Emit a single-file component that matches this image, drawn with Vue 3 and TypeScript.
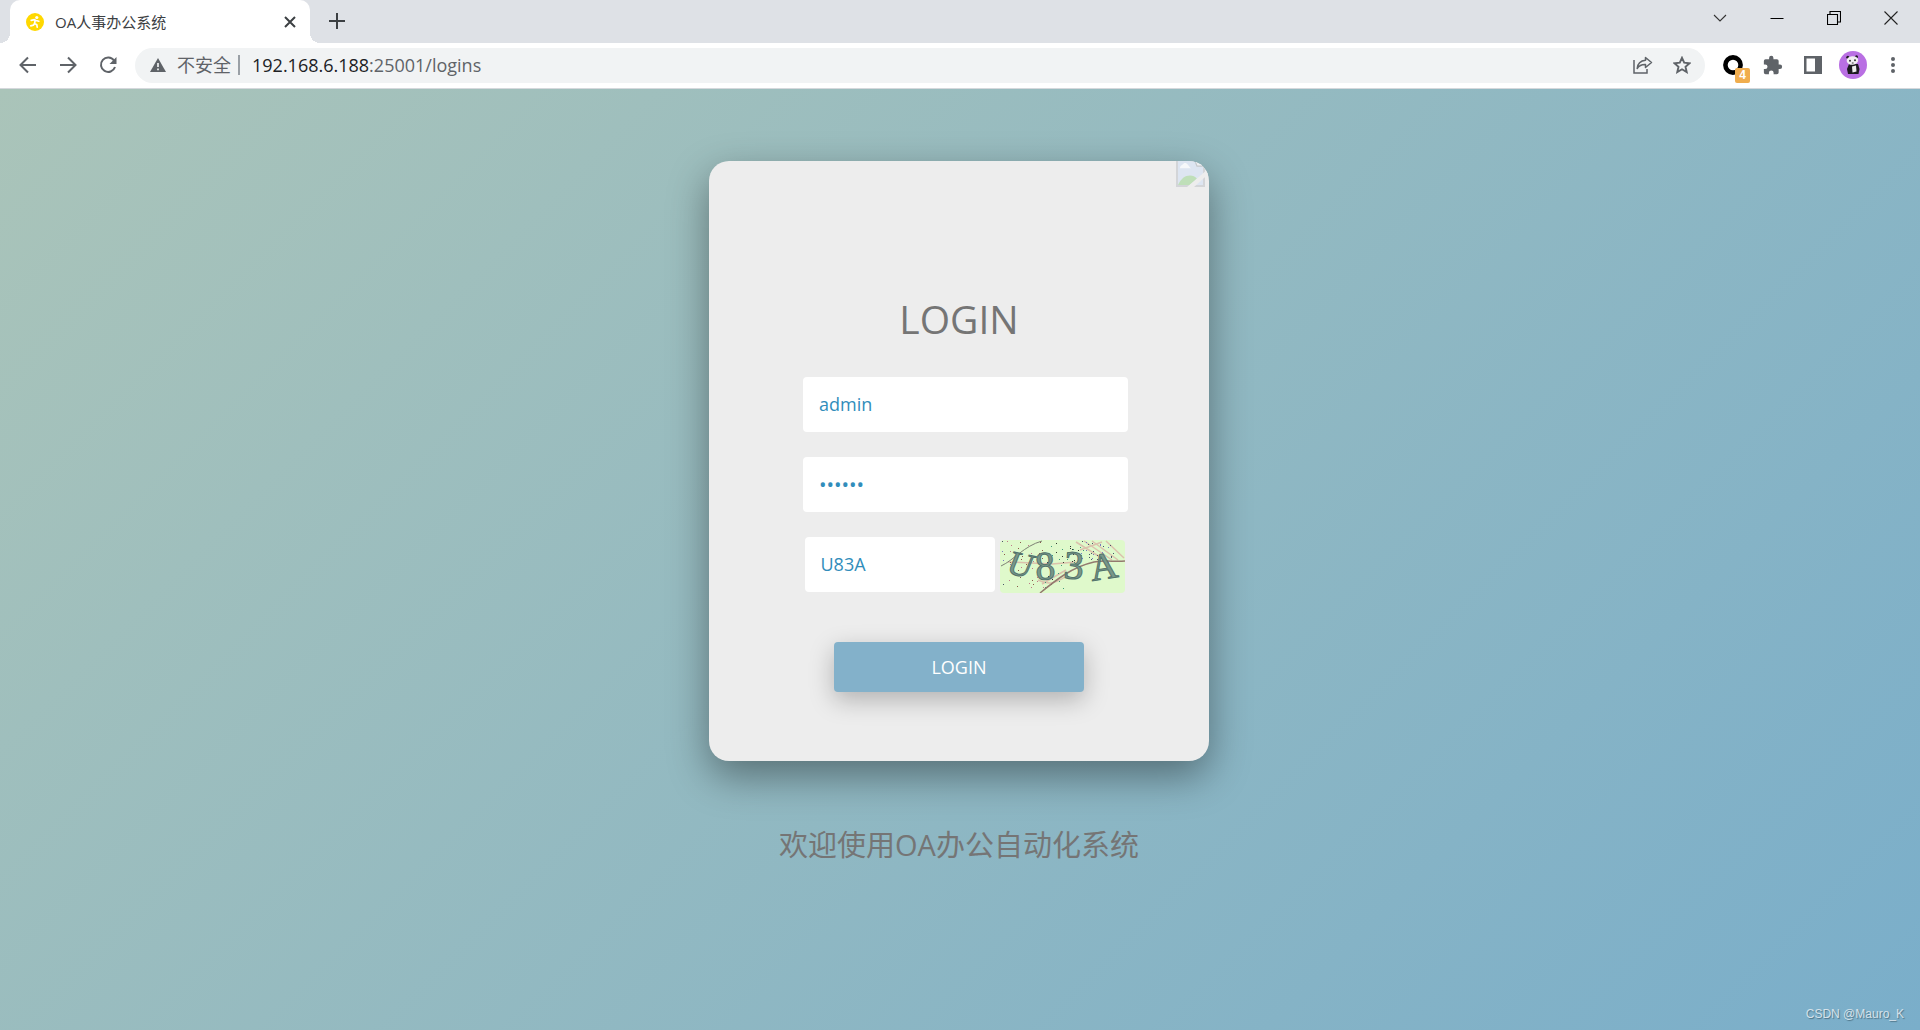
<script setup lang="ts">
import { ref } from 'vue'

const user = ref('admin')
const password = ref('123456')
const code = ref('U83A')

interface Speck {
  x: number
  y: number
  color: string
}

const colors = ['#4a5568', '#8a5a4a', '#3f9a78', '#7a7ac0', '#c07a8a', '#333a33']
const specks: Speck[] = Array.from({ length: 110 }, (_, i) => {
  const x = (i * 37 + ((i * i) % 11)) % 112
  const limit = x < 62 ? 48 : 22
  return { x: x + 2, y: ((i * 23 + ((i * i) % 7)) % limit) + 1, color: colors[i % colors.length] }
})
</script>

<template>
  <div class="browser">
    <header class="tabs">
      <div class="tab">
        <svg class="favicon" viewBox="0 0 18 18" aria-hidden="true">
          <circle cx="9" cy="9" r="9" fill="#ffd800" />
          <circle cx="10.8" cy="4.5" r="1.6" fill="#fff" />
          <path d="M5.2 7.4l3.2-.7 1.6.8 2.8.7M9.2 7.2l-.6 3.2 2.2 1.3.4 2.4M8.6 10.4l-1.3 1.8-2.5.6" fill="none" stroke="#fff" stroke-width="1.7" stroke-linecap="round" stroke-linejoin="round" />
        </svg>
        <span class="tab-title">OA人事办公系统</span>
        <button class="icon-btn tab-close" aria-label="关闭标签页">
          <svg width="12" height="12" viewBox="0 0 12 12"><path d="M1 1l10 10M11 1L1 11" stroke="#3c4043" stroke-width="2" /></svg>
        </button>
      </div>
      <button class="icon-btn new-tab" aria-label="新标签页">
        <svg width="16" height="16" viewBox="0 0 16 16"><path d="M8 0v16M0 8h16" stroke="#3c4043" stroke-width="2" /></svg>
      </button>
      <div class="window-controls">
        <button class="icon-btn" aria-label="搜索标签页">
          <svg width="14" height="14" viewBox="0 0 14 14"><path d="M1 4l6 6 6-6" fill="none" stroke="#333" stroke-width="1.1" /></svg>
        </button>
        <button class="icon-btn" aria-label="最小化">
          <svg width="14" height="14" viewBox="0 0 14 14"><path d="M.5 7.5h13" stroke="#000" /></svg>
        </button>
        <button class="icon-btn" aria-label="还原">
          <svg width="14" height="14" viewBox="0 0 14 14"><path d="M.5 3.5h10v10h-10zM3 3.500v-3h10.500v10.500h-3" fill="none" stroke="#000" stroke-width="1.1" /></svg>
        </button>
        <button class="icon-btn" aria-label="关闭">
          <svg width="14" height="14" viewBox="0 0 14 14"><path d="M.5 .5l13 13M13.5 .5l-13 13" stroke="#222" stroke-width="1.1" /></svg>
        </button>
      </div>
    </header>

    <nav class="toolbar">
      <button class="icon-btn nav-btn" aria-label="后退">
        <svg width="18" height="18" viewBox="0 0 18 18"><path d="M17 9H2M9 1.500L1.500 9 9 16.500" fill="none" stroke="#5f6368" stroke-width="2" /></svg>
      </button>
      <button class="icon-btn nav-btn" aria-label="前进">
        <svg width="18" height="18" viewBox="0 0 18 18"><path d="M1 9h15M9 1.500L16.500 9 9 16.500" fill="none" stroke="#5f6368" stroke-width="2" /></svg>
      </button>
      <button class="icon-btn nav-btn" aria-label="重新加载">
        <svg width="18" height="18" viewBox="0 0 18 18"><path d="M15 4.500A7.200 7.200 0 1 0 16 11" fill="none" stroke="#5f6368" stroke-width="2" /><path d="M17.500 1v7h-7z" fill="#5f6368" /></svg>
      </button>
      <div class="address">
        <svg width="16" height="14" viewBox="0 0 16 14" aria-hidden="true"><path d="M8 0l8 14H0z" fill="#5f6368" /><path d="M8 5v4M8 10.500v1.700" stroke="#f1f3f4" stroke-width="1.7" /></svg>
        <span class="insecure">不安全</span>
        <span class="divider"></span>
        <span class="url"><b>192.168.6.188</b>:25001/logins</span>
        <button class="icon-btn share" aria-label="分享">
          <svg width="20" height="18" viewBox="0 0 20 18"><path d="M1 4v13h13v-4" fill="none" stroke="#5f6368" stroke-width="1.5" /><path d="M12.500 1.500l6 5-6 5V8.600C8.500 8.400 6 9.800 4.200 12.500 4.600 8 7.500 4.800 12.500 4.300z" fill="none" stroke="#5f6368" stroke-width="1.5" stroke-linejoin="round" /></svg>
        </button>
        <button class="icon-btn" aria-label="收藏">
          <svg width="18" height="18" viewBox="0 0 18 18"><path d="M9 1.800l2.200 4.900 5.300.5-4 3.600 1.200 5.300L9 13.300l-4.700 2.800 1.200-5.300-4-3.600 5.300-.5z" fill="none" stroke="#5f6368" stroke-width="1.9" /></svg>
        </button>
      </div>
      <div class="extensions">
        <button class="icon-btn ext" aria-label="扩展">
          <svg width="20" height="20" viewBox="0 0 20 20"><circle cx="10" cy="10" r="7.6" fill="none" stroke="#000" stroke-width="4.6" /></svg>
          <span class="badge">4</span>
        </button>
        <button class="icon-btn" aria-label="扩展程序">
          <svg width="20" height="20" viewBox="1 0 23 23"><path fill="#5f6368" d="M20.500 11H19V7a2 2 0 0 0-2-2h-4V3.500a2.500 2.500 0 0 0-5 0V5H4a2 2 0 0 0-2 2v3.800h1.500a2.700 2.700 0 0 1 0 5.400H2V20a2 2 0 0 0 2 2h3.800v-1.500a2.700 2.700 0 0 1 5.400 0V22H17a2 2 0 0 0 2-2v-4h1.500a2.500 2.500 0 0 0 0-5z" /></svg>
        </button>
        <button class="icon-btn" aria-label="侧边栏">
          <svg width="18" height="18" viewBox="0 0 18 18"><path fill="#5f6368" fill-rule="evenodd" d="M0 0h18v18H0zM2.500 2.500v13h8.500v-13z" /></svg>
        </button>
        <button class="icon-btn" aria-label="用户">
          <svg width="28" height="28" viewBox="0 0 28 28">
            <circle cx="14" cy="14" r="14" fill="#b96fe3" />
            <path d="M10 13h9l1.500 5-1 5H9l-1-5z" fill="#1d1a20" />
            <path d="M13 15.500l4-1 .5 6-4 1z" fill="#eee" />
            <circle cx="8.800" cy="6.300" r="1.500" fill="#1d1a20" /><circle cx="17.500" cy="5.700" r="1.500" fill="#1d1a20" />
            <ellipse cx="13.400" cy="9.500" rx="5.800" ry="4.300" fill="#f1eef2" transform="rotate(-6 13 9)" />
            <circle cx="11" cy="9.800" r="1" fill="#333" /><circle cx="16" cy="9.300" r="1" fill="#333" />
            <path d="M12.800 12h1.800" stroke="#333" />
          </svg>
        </button>
        <button class="icon-btn" aria-label="菜单">
          <svg width="18" height="18" viewBox="0 0 18 18"><g fill="#5f6368"><circle cx="9" cy="3" r="2" /><circle cx="9" cy="9" r="2" /><circle cx="9" cy="15" r="2" /></g></svg>
        </button>
      </div>
    </nav>

    <main class="page">
      <form class="card" @submit.prevent>
        <svg class="broken" width="33" height="26" viewBox="0 0 33 25" preserveAspectRatio="none" aria-hidden="true">
          <path d="M0 0h29v25H0z" fill="#d3d5d8" />
          <path d="M2 0h25v23H2z" fill="#dde5f1" />
          <path d="M4 7c0-3 3-3 4-5 3-1 4 2 7 5z" fill="#f6f8fa" />
          <path d="M2 23c3-6 7-9 12-9 3 0 5 1 7 3l-7 6z" fill="#bfdfb9" />
          <path d="M11 25L33 7v5L18 25z" fill="#ededed" />
          <path d="M19 0l2 5h8l-7-5z" fill="#eef0f2" stroke="#c4c7ca" stroke-width="1.2" />
        </svg>
        <h1>LOGIN</h1>
        <input v-model="user" class="field" type="text" aria-label="用户名" />
        <input v-model="password" class="field password" type="password" aria-label="密码" />
        <div class="captcha-row">
          <input v-model="code" class="field code" type="text" aria-label="验证码" />
          <svg class="captcha" width="125" height="53" viewBox="0 0 125 53" role="img" aria-label="验证码图片">
            <rect width="125" height="53" fill="#dff9cb" />
            <g fill="none" stroke="#d9b3a4" stroke-width="1.5" opacity=".8">
              <path d="M8 22l44 2 24-2M38 40c12 6 20 2 30-5M76 2l32 20M84 1l28 19M92 1l26 19M106 1l18 17M42 44l24-14M80 10l22-8" />
            </g>
            <rect v-for="(s, i) in specks" :key="i" :x="s.x" :y="s.y" width="1" height="1" :fill="s.color" />
            <g fill="none" stroke="#7d8174">
              <path d="M1 26C14 20 24 6 42 1" />
              <path d="M40 53C56 40 72 27 94 22c12-2 20 0 31-1" stroke="#93796e" stroke-width="1.5" />
            </g>
            <g class="glyphs">
              <text class="slanted" x="6" y="33" transform="rotate(12 6 33)">U</text>
              <text x="36" y="40" transform="rotate(-4 36 40)">8</text>
              <text x="63" y="38" transform="rotate(4 63 38)">3</text>
              <text class="narrow" x="92" y="41" transform="rotate(-9 92 41)">A</text>
            </g>
          </svg>
        </div>
        <button class="submit" type="submit">LOGIN</button>
      </form>
      <p class="welcome">欢迎使用OA办公自动化系统</p>
      <span class="credit">CSDN @Mauro_K</span>
    </main>
  </div>
</template>

<style>
body {
  margin: 0;
}
</style>

<style scoped>
.browser {
  display: flex;
  flex-direction: column;
  min-height: 100vh;
  font-family: "Open Sans", "Noto Sans CJK SC", sans-serif;
  color: #3c4043;
}
.icon-btn {
  display: flex;
  align-items: center;
  justify-content: center;
  padding: 0;
  border: 0;
  background: none;
}
.tabs {
  display: flex;
  height: 43px;
  padding-left: 10px;
  background: #dee1e6;
}
.tab {
  position: relative;
  display: flex;
  align-items: center;
  box-sizing: border-box;
  width: 300px;
  padding: 0 14px 0 16px;
  border-radius: 10px 10px 0 0;
  background: #fff;
}
.tab::before,
.tab::after {
  content: "";
  position: absolute;
  bottom: 0;
  width: 10px;
  height: 10px;
}
.tab::before {
  right: 100%;
  background: radial-gradient(circle at 0 0, transparent 10px, #fff 10px);
}
.tab::after {
  left: 100%;
  background: radial-gradient(circle at 100% 0, transparent 10px, #fff 10px);
}
.favicon {
  width: 18px;
  height: 18px;
}
.tab-title {
  flex: 1;
  margin-left: 11px;
  font-size: 15px;
  line-height: 20px;
}
.new-tab {
  margin-left: 19px;
  padding-bottom: 1px;
}
.window-controls {
  display: flex;
  align-items: center;
  height: 36px;
  margin-left: auto;
  padding-right: 1px;
}
.window-controls .icon-btn {
  width: 57px;
  height: 36px;
}
.toolbar {
  display: flex;
  align-items: center;
  height: 44px;
  padding: 0 7px 1px 8px;
  border-bottom: 1px solid #d5d8dc;
  background: #fff;
}
.nav-btn {
  width: 40px;
  height: 40px;
}
.address {
  display: flex;
  flex: 1;
  align-items: center;
  height: 35px;
  margin-left: 7px;
  padding: 0 14px 0 15px;
  border-radius: 18px;
  background: #f1f3f4;
  color: #5f6368;
  font-size: 18px;
  line-height: 24px;
}
.insecure {
  margin-left: 11px;
}
.divider {
  width: 2px;
  height: 20px;
  margin: 0 12px 0 7px;
  background: #9aa0a6;
}
.url b {
  color: #202124;
  font-weight: 400;
}
.share {
  margin: 0 20px 0 auto;
}
.extensions {
  display: flex;
  align-items: center;
  padding-left: 8px;
}
.extensions .icon-btn {
  width: 40px;
  height: 40px;
}
.ext {
  position: relative;
}
.badge {
  position: absolute;
  right: 3px;
  bottom: 2px;
  width: 15px;
  height: 15px;
  border-radius: 2px;
  background: #f0ad4e;
  color: #fff;
  font-size: 12px;
  font-weight: 600;
  line-height: 15px;
}
.page {
  position: relative;
  display: flex;
  flex: 1;
  flex-direction: column;
  align-items: center;
  padding: 72px 2px 0 0;
  background: linear-gradient(135deg, #aac4b9, #7aaeca);
}
.card {
  display: flex;
  flex-direction: column;
  align-items: center;
  position: relative;
  box-sizing: border-box;
  width: 500px;
  padding: 130px 0 69px;
  overflow: hidden;
  border-radius: 20px;
  background: #ededed;
  box-shadow: 0 15px 40px rgba(0, 0, 0, 0.4);
}
.broken {
  position: absolute;
  top: 0;
  right: 0;
}
h1 {
  margin: 0 0 31px;
  color: #757575;
  font-size: 39px;
  font-weight: 400;
  line-height: 55px;
}
.field {
  box-sizing: border-box;
  width: 325px;
  height: 55px;
  margin: 0 0 25px 13px;
  padding: 0 16px 2px;
  border: 0;
  border-radius: 4px;
  background: #fff;
  color: #318dbb;
  font: 18px/24px "Open Sans", "Noto Sans CJK SC", sans-serif;
}
.password {
  padding-bottom: 0;
  font-size: 20px;
}
.captcha-row {
  display: flex;
  align-items: flex-start;
  gap: 5px;
  margin: 0 0 49px 11px;
}
.code {
  width: 190px;
  margin: 0;
}
.captcha {
  margin-top: 3px;
  border-radius: 4px;
}
.glyphs {
  fill: #78978a;
  stroke: #54736b;
  stroke-width: 1;
  font: 40px "Liberation Serif", serif;
}
.slanted {
  font-size: 34px;
  font-style: italic;
}
.narrow {
  font-size: 38px;
}
.submit {
  width: 250px;
  height: 50px;
  padding: 0;
  border: 0;
  border-radius: 4px;
  background: #83b1ca;
  box-shadow: 0 8px 24px rgba(0, 0, 0, 0.25);
  color: #fff;
  font: 18px/24px "Open Sans", sans-serif;
}
.welcome {
  margin: 64px 0 0;
  color: #757575;
  font-size: 29px;
  line-height: 40px;
}
.credit {
  position: absolute;
  right: 16px;
  bottom: 8px;
  color: #d5e2ea;
  font: 12px/16px "Liberation Sans", sans-serif;
  text-shadow: 1px 1px 1px #4d7386;
}
</style>
